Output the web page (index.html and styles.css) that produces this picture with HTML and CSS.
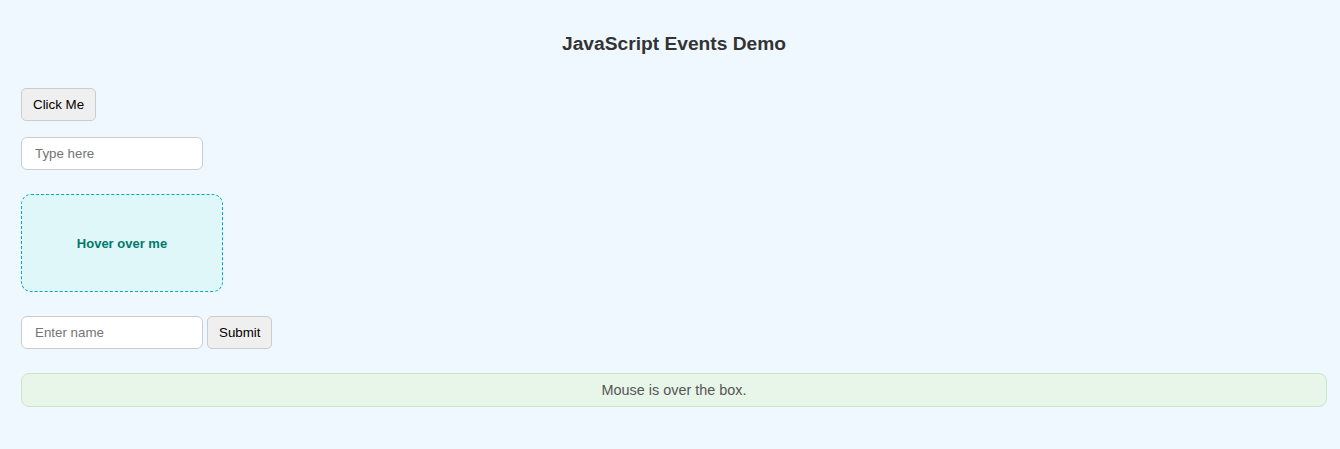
FILE: index.html
```html
<!DOCTYPE html>
<html>
<head>
<meta charset="utf-8">
<link rel="stylesheet" href="styles.css">
</head>
<body>
<main class="page">
  <h1 class="title">JavaScript Events Demo</h1>
  <div class="row"><button class="btn">Click Me</button></div>
  <div class="row row-tight"><input class="field" type="text" placeholder="Type here"></div>
  <div class="hover-box">Hover over me</div>
  <form class="form-row">
    <input class="field" type="text" placeholder="Enter name"><button class="btn" type="button">Submit</button>
  </form>
  <div class="status">Mouse is over the box.</div>
</main>
</body>
</html>
```

FILE: styles.css
```css
html, body {
  margin: 0;
  padding: 0;
  background: #f0f8ff;
}
body {
  font-family: "Liberation Sans", Arial, sans-serif;
  color: #333;
}
.page {
  display: flex;
  flex-direction: column;
  align-items: flex-start;
  padding: 33px 13px 40px 21px;
}
.title {
  align-self: stretch;
  text-align: center;
  font-size: 19.2px;
  line-height: 22px;
  font-weight: bold;
  color: #333;
  margin: 0 0 33px 0;
}
.row {
  margin-bottom: 16px;
}
.row-tight {
  margin-bottom: 24px;
}
.btn {
  font-family: "Liberation Sans", Arial, sans-serif;
  font-size: 13.33px;
  line-height: 15px;
  padding: 8px 11px;
  border: 1px solid #ccc;
  border-radius: 5px;
  background: #efefef;
  color: #000;
  margin: 0;
}
.field {
  box-sizing: border-box;
  width: 182px;
  height: 33px;
  font-family: "Liberation Sans", Arial, sans-serif;
  font-size: 13.33px;
  padding: 8px 13px;
  border: 1px solid #ccc;
  border-radius: 6px;
  background: #fff;
  margin: 0;
}
.field::placeholder {
  color: #757575;
}
.hover-box {
  box-sizing: border-box;
  width: 202px;
  height: 98px;
  display: flex;
  align-items: center;
  justify-content: center;
  border: 1px dashed #00acc1;
  border-radius: 10px;
  background: #e0f7fa;
  color: #00796b;
  font-weight: bold;
  font-size: 13px;
  margin-bottom: 24px;
}
.form-row {
  display: flex;
  gap: 4px;
  margin: 0 0 24px 0;
}
.status {
  align-self: stretch;
  box-sizing: border-box;
  height: 34px;
  display: flex;
  align-items: center;
  justify-content: center;
  border: 1px solid #c8e6c9;
  border-radius: 8px;
  background: #e8f5e9;
  color: #555;
  font-size: 14.4px;
}
```
